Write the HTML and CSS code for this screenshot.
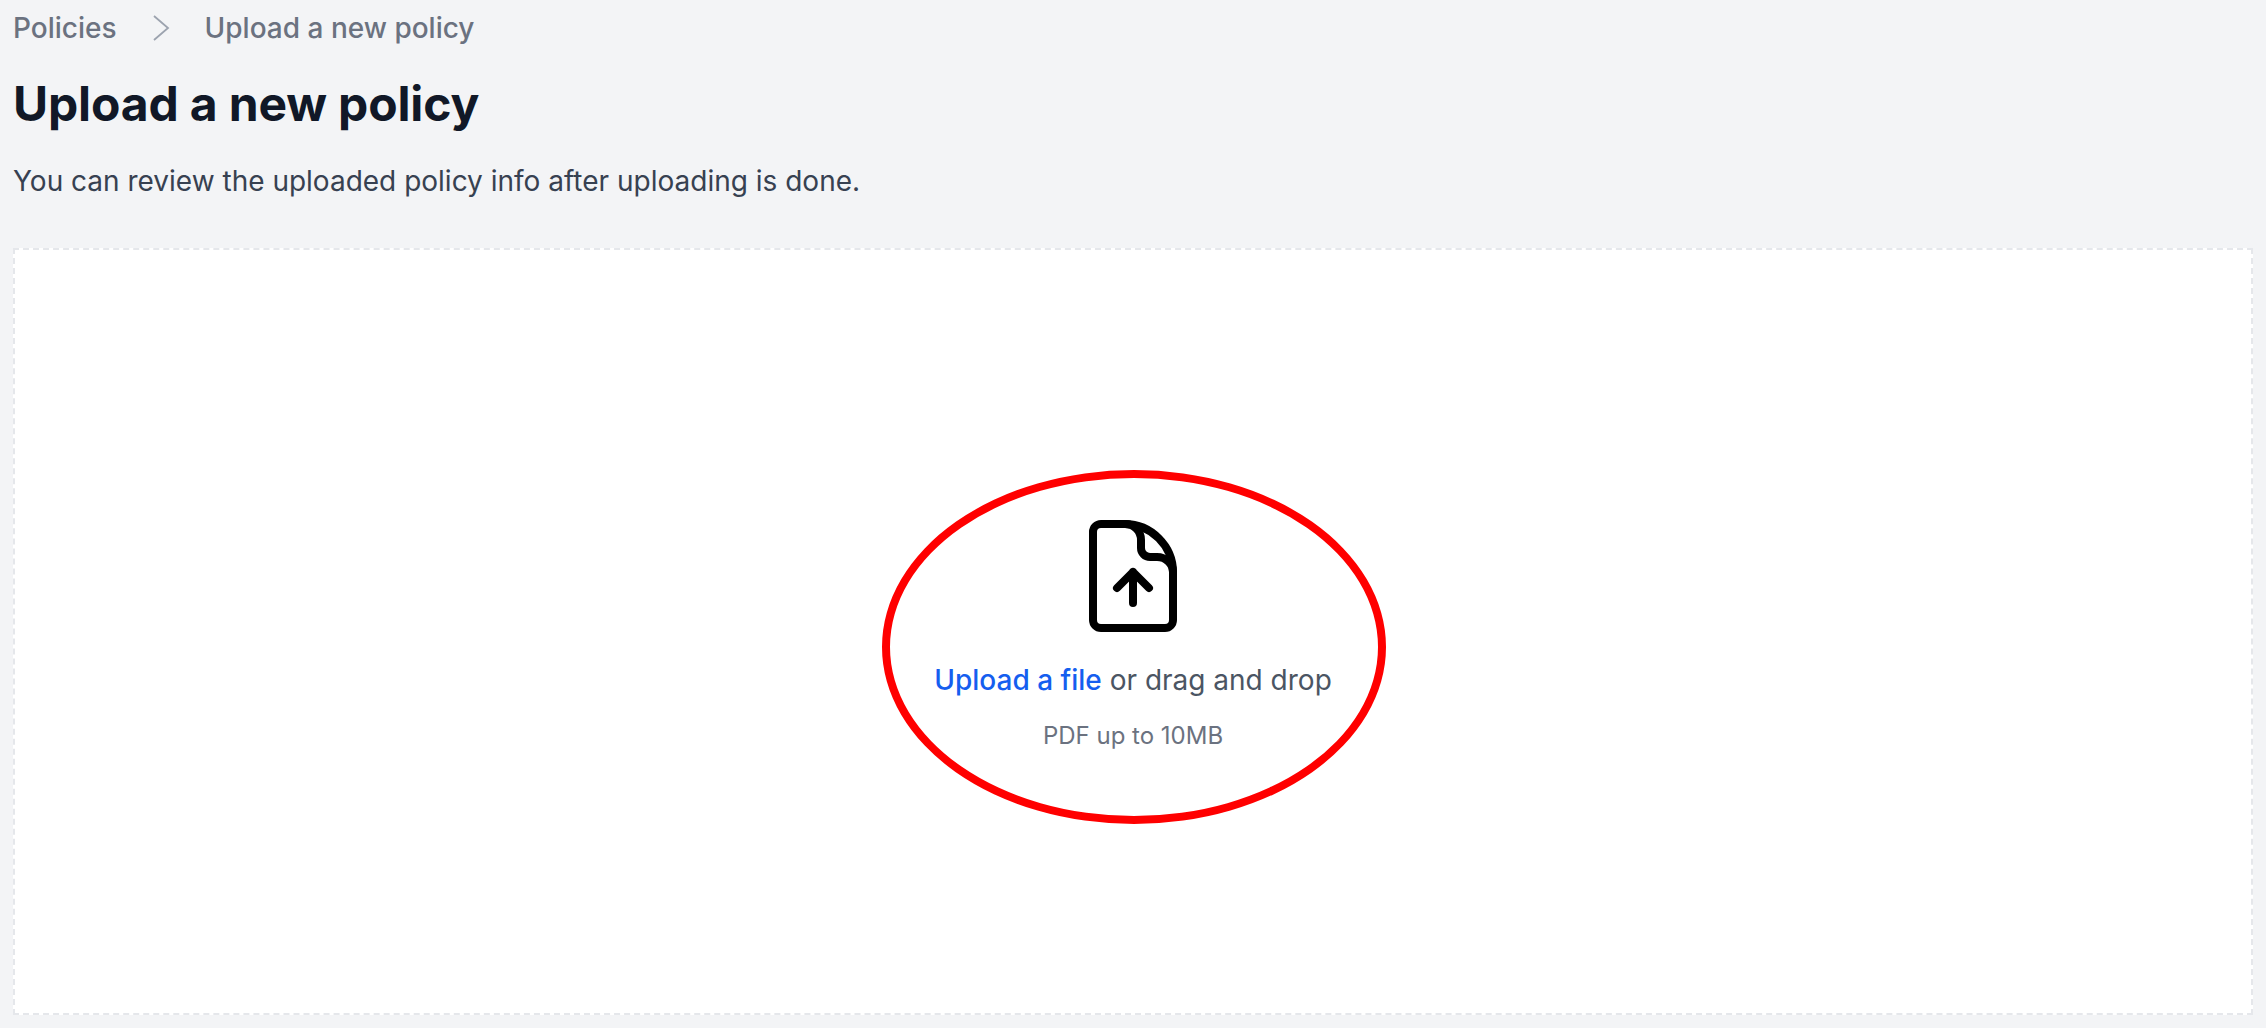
FILE: index.html
```html
<!DOCTYPE html>
<html lang="en">
<head>
  <meta charset="UTF-8" />
  <title>Upload a new policy</title>
  <link rel="stylesheet" href="styles.css">
</head>
<body>
  <nav class="breadcrumb">
    <span>Policies</span>
    <svg class="crumb-sep" viewBox="0 0 18 26" width="18" height="26" fill="none" stroke="#9ca3af" stroke-width="1.8"><path d="M2 1l14 12L2 25"/></svg>
    <span>Upload a new policy</span>
  </nav>
  <h1>Upload a new policy</h1>
  <p class="subtitle">You can review the uploaded policy info after uploading is done.</p>

  <main class="dropzone">
    <svg class="file-icon" viewBox="0 0 88 112" width="88" height="112" fill="none" stroke="#000" stroke-width="8" stroke-linecap="round" stroke-linejoin="round">
      <path d="M36 4H12a8 8 0 0 0-8 8v88a8 8 0 0 0 8 8h64a8 8 0 0 0 8-8V52C84 26 62 4 36 4z"/>
      <path d="M36 4c9 0 16 7 16 16v8c0 5 4 9 9 9h7c9 0 16 7 16 15"/>
      <path d="M44 83V52M28 68l16-16 16 16"/>
    </svg>
    <p class="drop-text"><a class="upload-link">Upload a file</a> or drag and drop</p>
    <p class="drop-hint">PDF up to 10MB</p>
    <div class="highlight"></div>
  </main>
</body>
</html>
```

FILE: styles.css
```css
body {
  margin: 0;
  padding: 0 13px 12px;
  background-color: #f3f4f6;
  font-family: 'Inter', sans-serif;
  color: #374151;
}

.breadcrumb {
  display: flex;
  align-items: center;
  gap: 35px;
  height: 56px;
  font-size: 28px;
  font-weight: 500;
  color: #6b7280;
}

h1 {
  margin: 20px 0 0;
  font-size: 48px;
  line-height: 56px;
  font-weight: 700;
  letter-spacing: -0.15px;
  color: #111827;
}

.subtitle {
  margin: 31px 0 0;
  font-size: 28px;
  line-height: 36px;
}

.dropzone {
  position: relative;
  box-sizing: border-box;
  height: 767px;
  margin-top: 49px;
  padding-top: 9px;
  display: flex;
  flex-direction: column;
  align-items: center;
  justify-content: center;
  background-color: white;
  border: 2px dashed #e5e7eb;
}

.file-icon {
  display: block;
}

.drop-text {
  margin: 30px 0 0;
  font-size: 28px;
  line-height: 36px;
  color: #4b5563;
}

.upload-link {
  font-weight: 500;
  color: #155eef;
}

.drop-hint {
  margin: 22px 0 0;
  font-size: 24px;
  line-height: 32px;
  color: #6b7280;
}

.highlight {
  position: absolute;
  left: 867px;
  top: 220px;
  box-sizing: border-box;
  width: 504px;
  height: 354px;
  border: 8px solid #ff0000;
  border-radius: 50%;
}
```
